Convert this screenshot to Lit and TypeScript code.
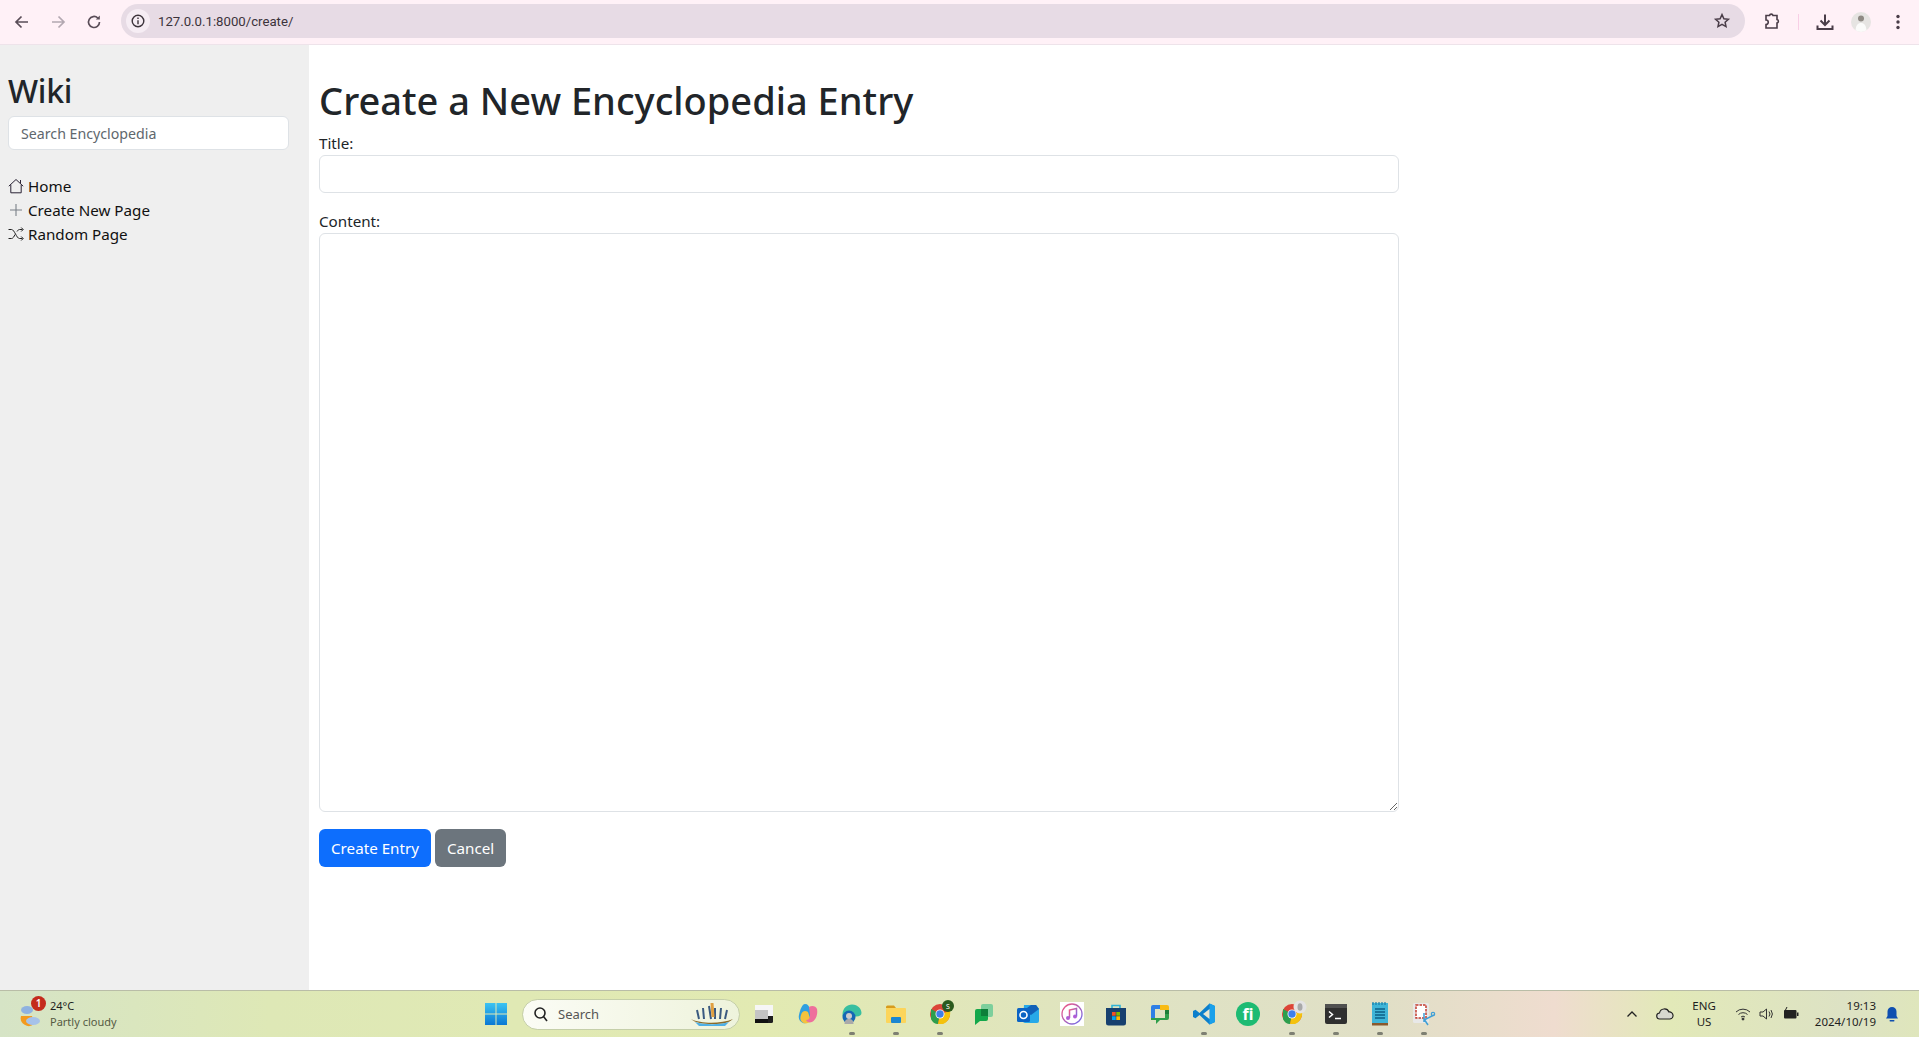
import { LitElement, html, css, svg } from 'lit';
import { customElement } from 'lit/decorators.js';

@customElement('browser-bar')
class BrowserBar extends LitElement {
  static styles = css`
    :host {
      display: flex;
      align-items: center;
      height: 44px;
      flex: none;
      background: #fff1f7;
      border-bottom: 1px solid #eee3ea;
      box-sizing: content-box;
      font-family: "Roboto", sans-serif;
    }
    .nav {
      display: flex;
      gap: 16px;
      padding-left: 12px;
      margin-right: 17px;
    }
    .btn {
      width: 20px;
      height: 20px;
      display: block;
    }
    .omni {
      flex: 1;
      height: 34px;
      margin-bottom: 2px;
      border-radius: 17px;
      background: #e7dbe5;
      display: flex;
      align-items: center;
      padding: 0 14px 0 5px;
      font-size: 13.200px;
      color: #3c333b;
    }
    .info {
      width: 24px;
      height: 24px;
      border-radius: 50%;
      background: #f6edf4;
      display: flex;
      align-items: center;
      justify-content: center;
      margin-right: 8px;
    }
    .url {
      flex: 1;
    }
    .right {
      display: flex;
      align-items: center;
      padding-left: 17px;
      padding-right: 17px;
    }
    .sep {
      width: 1px;
      height: 16px;
      background: #f8cfe6;
      margin: 0 16px;
    }
    .avatar {
      width: 20px;
      height: 20px;
      border-radius: 50%;
      margin: 0 23px 0 16px;
      background: #e6e4e2;
      overflow: hidden;
    }
  `;

  render() {
    return html`
      <div class="nav">
        <svg class="btn" viewBox="0 0 20 20" fill="none" stroke="#5a4d58" stroke-width="1.7"><path d="M16 10H4.500M9.500 4.500 4 10l5.500 5.500"/></svg>
        <svg class="btn" viewBox="0 0 20 20" fill="none" stroke="#b3a8b1" stroke-width="1.7"><path d="M4 10h11.500M10.500 4.500 16 10l-5.500 5.500"/></svg>
        <svg class="btn" viewBox="0 0 20 20" fill="none" stroke="#5a4d58" stroke-width="1.7"><path d="M15.500 10a5.500 5.500 0 1 1-1.700-4"/><path d="M15.800 3.500v4h-4" fill="#5a4d58" stroke="none"/></svg>
      </div>
      <div class="omni">
        <div class="info">
          <svg width="16" height="16" viewBox="0 0 16 16" fill="none" stroke="#3c333b" stroke-width="1.400"><circle cx="8" cy="8" r="5.800"/><path d="M8 7.200v4M8 4.500v1.400"/></svg>
        </div>
        <span class="url">127.0.0.1:8000/create/</span>
        <svg width="18" height="18" viewBox="0 0 18 18" fill="none" stroke="#4a3d48" stroke-width="1.500"><path d="M9 2.600l1.900 4.100 4.500.5-3.300 3 .9 4.400L9 12.400l-4 2.200.9-4.400-3.300-3 4.500-.5z"/></svg>
      </div>
      <div class="right">
        <svg width="20" height="20" viewBox="0 0 20 20" fill="none" stroke="#4a3d48" stroke-width="1.600"><path d="M4 3.500h3.500a1.800 1.800 0 0 1 3.500 0H15v4a1.800 1.800 0 0 1 0 3.500v5H4v-3.500a2 2 0 0 0 0-4.500z"/></svg>
        <div class="sep"></div>
        <svg width="20" height="20" viewBox="0 0 20 20" fill="none" stroke="#4a3d48" stroke-width="2"><path d="M10 2.500v10M5.500 8.500l4.500 4.500 4.500-4.500M2.500 13.500v3.500h15v-3.500"/></svg>
        <div class="avatar">
          <svg width="20" height="20" viewBox="0 0 20 20"><circle cx="10" cy="6.500" r="3" fill="#8f8a84"/><path d="M4.500 20c0-7 2.500-9 5.500-9s5.500 2 5.500 9z" fill="#fbfbfa"/></svg>
        </div>
        <svg width="8" height="20" viewBox="4 0 8 20" fill="#4a3d48"><circle cx="8" cy="4.500" r="1.700"/><circle cx="8" cy="10" r="1.700"/><circle cx="8" cy="15.500" r="1.700"/></svg>
      </div>
    `;
  }
}

@customElement('wiki-sidebar')
class WikiSidebar extends LitElement {
  static styles = css`
    :host {
      display: block;
      width: 309px;
      flex: none;
      box-sizing: border-box;
      background: #efefef;
      padding: 22px 20px 0 8px;
      color: #212529;
    }
    h2 {
      margin: 0 0 1px;
      font-size: 32px;
      line-height: 48px;
      font-weight: 500;
      letter-spacing: -0.3px;
    }
    input {
      display: block;
      width: 100%;
      height: 34px;
      box-sizing: border-box;
      border: 1px solid #dee2e6;
      border-radius: 6px;
      padding: 0 12px;
      font: inherit;
      font-size: 14.200px;
      background: #fff;
    }
    input::placeholder {
      color: #60676d;
      opacity: 1;
    }
    ul {
      list-style: none;
      margin: 24px 0 0;
      padding: 0;
    }
    li {
      height: 24px;
      display: flex;
      align-items: center;
      gap: 4px;
      font-size: 15.200px;
      color: #111;
    }
    svg {
      width: 16px;
      height: 16px;
      flex: none;
    }
  `;

  render() {
    return html`
      <h2>Wiki</h2>
      <input type="text" placeholder="Search Encyclopedia" />
      <ul>
        <li>
          <svg viewBox="0 0 16 16" fill="none" stroke="#2a2335" stroke-width="1"><path d="M.8 8.200 8 1.500l7.200 6.700M2.800 6.800v8h10.400v-8M12.500 2v3.500"/></svg>
          Home
        </li>
        <li>
          <svg viewBox="0 0 16 16" fill="none" stroke="#7a8088" stroke-width="1.100"><path d="M8 2v12M2 8h12"/></svg>
          Create New Page
        </li>
        <li>
          <svg viewBox="0 0 16 16" fill="none" stroke="#222" stroke-width="1"><path d="M.5 3.500h3c3 0 5 9 8 9h3M.5 12.500h3c1.500 0 2.600-2 3.500-4M9 5.500c.8-1.200 1.500-2 2.500-2h3M13.200 1.500l2 2-2 2M13.200 10.500l2 2-2 2"/></svg>
          Random Page
        </li>
      </ul>
    `;
  }
}

@customElement('create-form')
class CreateForm extends LitElement {
  static styles = css`
    :host {
      display: block;
      flex: 1;
      min-width: 0;
      padding: 31px 0 0 10px;
      color: #212529;
      background: #fff;
    }
    h1 {
      margin: 0 0 7px;
      font-size: 38px;
      line-height: 48px;
      font-weight: 500;
    }
    form {
      width: 1080px;
    }
    .group {
      margin-bottom: 16px;
    }
    label {
      display: block;
      font-size: 15.200px;
      line-height: 24px;
    }
    input,
    textarea {
      display: block;
      width: 100%;
      box-sizing: border-box;
      border: 1px solid #dee2e6;
      border-radius: 6px;
      background: #fff;
      margin: 0;
      font: inherit;
    }
    input {
      height: 38px;
    }
    textarea {
      height: 579px;
    }
    .actions {
      display: flex;
      gap: 4px;
      margin-top: 17px;
    }
    button {
      height: 38px;
      border: 0;
      border-radius: 6px;
      padding: 0 12px;
      font: inherit;
      font-size: 15.200px;
      color: #fff;
    }
    .primary {
      background: #0d6efd;
    }
    .secondary {
      background: #6c757d;
    }
  `;

  render() {
    return html`
      <h1>Create a New Encyclopedia Entry</h1>
      <form>
        <div class="group">
          <label>Title:</label>
          <input type="text" />
        </div>
        <div>
          <label>Content:</label>
          <textarea></textarea>
        </div>
        <div class="actions">
          <button type="button" class="primary">Create Entry</button>
          <button type="button" class="secondary">Cancel</button>
        </div>
      </form>
    `;
  }
}

const dock = [
  svg`<rect x="3" y="3" width="18" height="18" rx="1.500" fill="#1e1e1e"/><rect x="3" y="3" width="18" height="11" fill="#f6f6f6"/><rect x="3" y="8" width="13" height="9" fill="#c4c4c4"/><rect x="3" y="17" width="13" height="4" fill="#111"/>`,
  svg`<path d="M9 2c3 0 4 2 5 5l2 7c-1 5-5 8-9 7-3-1-5-4-4-8 1-5 3-11 6-11z" fill="#2f9fe0"/><path d="M5 13c1-4 4-5 7-3l3 9c-3 3-7 3-9 1-2-2-2-4-1-7z" fill="#f4c23e"/><path d="M13 5c3-2 7-1 8 2 1 5-1 11-5 13-3 1-5 0-6-2 3 0 4-2 4-5z" fill="#ee6f9c"/>`,
  svg`<path d="M2.500 12C3 6 7 2.500 12 2.500c6 0 9.500 4.500 9.500 8.500 0 2-2 3.500-5 3.500-3 0-3-2-3-3-3-1-7 0-8 4-1 1-3 0-3-3.500z" fill="#38bfa0"/><circle cx="9" cy="15" r="6.500" fill="#1467b5"/><circle cx="9" cy="14" r="3" fill="#ccc"/><path d="M4.500 22c0-4 2-5 4.500-5s4.500 1 4.500 5z" fill="#aaa"/>`,
  svg`<path d="M2 5a1.500 1.500 0 0 1 1.500-1.500H10l2 2.500h-10z" fill="#d79b1d"/><rect x="2" y="6" width="20" height="15" rx="1" fill="#fcd55b"/><rect x="7" y="15" width="10" height="6" rx="1" fill="#1b86d1"/>`,
  svg`<circle cx="12" cy="12" r="10" fill="#dc4437"/><path d="M12 12 3 7v10c1 3 4 5 7 5z" fill="#2d9e4d"/><path d="M12 12l10-3c1 6-2 11-7 13l-5 0z" fill="#f4c20d"/><circle cx="12" cy="12" r="4.500" fill="#fff"/><circle cx="12" cy="12" r="3.700" fill="#3f7fe8"/><circle cx="20" cy="4" r="6" fill="#2b5a1e"/><text x="20" y="6.500" font-size="7" fill="#fff" text-anchor="middle" font-family="Noto Sans">S</text>`,
  svg`<rect x="9" y="2" width="12" height="13" rx="2" fill="#7dcf9c"/><path d="M3 9a2 2 0 0 1 2-2h9a2 2 0 0 1 2 2v8a2 2 0 0 1-2 2H8l-5 4z" fill="#14a84b"/><rect x="9" y="7" width="7" height="7" fill="#0d7f39"/>`,
  svg`<path d="M8 3h12l3 4v12a2 2 0 0 1-2 2H9a2 2 0 0 1-2-2z" fill="#27a9e8"/><path d="M7 9l8-6h5l3 4-8 6z" fill="#1160b7"/><rect x="1" y="6" width="13" height="14" rx="1.500" fill="#0b63c4"/><circle cx="7.500" cy="13" r="3.500" fill="none" stroke="#fff" stroke-width="1.600"/>`,
  svg`<rect width="24" height="24" fill="#fff"/><circle cx="12" cy="12" r="10" fill="none" stroke="url(#itn)" stroke-width="1.300"/><defs><linearGradient id="itn" x1="0" y1="0" x2="1" y2="1"><stop offset="0" stop-color="#f6567e"/><stop offset="1" stop-color="#6b6ef0"/></linearGradient></defs><path d="M9.500 16V8l7-1.500v8" fill="none" stroke="url(#itn)" stroke-width="1.500"/><circle cx="8" cy="16" r="2" fill="#b05ed6"/><circle cx="15" cy="14.500" r="2" fill="#b05ed6"/>`,
  svg`<path d="M8 6V3.500h8V6" fill="none" stroke="#31b3d6" stroke-width="1.600"/><path d="M2 6h20v15a2.500 2.500 0 0 1-2.500 2.500h-15A2.500 2.500 0 0 1 2 21z" fill="#17406f"/><rect x="8" y="10" width="3.700" height="3.700" fill="#f25022"/><rect x="12.300" y="10" width="3.700" height="3.700" fill="#7fba00"/><rect x="8" y="14.300" width="3.700" height="3.700" fill="#00a4ef"/><rect x="12.300" y="14.300" width="3.700" height="3.700" fill="#ffb900"/>`,
  svg`<path d="M3 5a2 2 0 0 1 2-2h7v4H7v9H3z" fill="#2f7fe6"/><path d="M12 3h7a2 2 0 0 1 2 2v3h-9z" fill="#f8bb14"/><path d="M17 8h4v8a2 2 0 0 1-2 2h-7l-4 4v-4H3v-2h14z" fill="#2e9e4a"/><path d="M17 8h4v4h-4z" fill="#1c7d39"/>`,
  svg`<path d="M17.500 1.500 23 4v16l-5.500 2.500L7.500 13l-4 3.200L1 15V9l2.500-1.200 4 3.200z" fill="#0c7fcb"/><path d="M17.500 1.500 23 4v16l-5.500 2.500z" fill="#1aa0ea"/><path d="M17.500 7 11 12l6.500 5z" fill="#e6e6d2"/>`,
  svg`<circle cx="12" cy="12" r="12" fill="#1dbb73"/><text x="12" y="18" font-size="16" font-weight="700" fill="#fff" text-anchor="middle" font-family="Noto Sans">fi</text>`,
  svg`<circle cx="12" cy="12" r="10" fill="#dc4437"/><path d="M12 12 3 7v10c1 3 4 5 7 5z" fill="#2d9e4d"/><path d="M12 12l10-3c1 6-2 11-7 13l-5 0z" fill="#f4c20d"/><circle cx="12" cy="12" r="4.500" fill="#fff"/><circle cx="12" cy="12" r="3.700" fill="#3f7fe8"/><circle cx="20" cy="5" r="6.500" fill="#e3e3e3"/><ellipse cx="20" cy="5" rx="2.500" ry="3.800" fill="#a8a8a8"/>`,
  svg`<rect x="1" y="2" width="22" height="20" rx="2" fill="#2f2f2f"/><rect x="1" y="2" width="22" height="4" fill="#505050"/><path d="M5 9.500l3.500 3-3.500 3" fill="none" stroke="#fff" stroke-width="1.500"/><path d="M11 16.500h6" stroke="#fff" stroke-width="1.500"/>`,
  svg`<rect x="4" y="1" width="16" height="21" fill="#3fb5d8"/><path d="M5 0v3M8 0v3M11 0v3M14 0v3M17 0v3" stroke="#1a7fa8" stroke-width="1.200"/><path d="M7 7h10M7 10h10M7 13h10M7 16h10" stroke="#0d5f86" stroke-width="1.300"/><rect x="4" y="21" width="16" height="2.500" fill="#8a5a2e"/>`,
  svg`<rect x="1" y="1" width="16" height="20" rx="1.500" fill="#e8e8e8"/><rect x="4" y="3" width="10" height="13" fill="#fff" stroke="#c43b2e" stroke-width="1.500" stroke-dasharray="2.500 1"/><path d="M12 11v9M16 23l-4-6M22 13l-10 5" stroke="#3f9fd6" stroke-width="1.500" fill="none"/><circle cx="21" cy="12" r="1.700" fill="none" stroke="#3f9fd6" stroke-width="1.200"/>`,
];

const running = new Set([2, 3, 4, 10, 12, 13, 14, 15]);

@customElement('win-taskbar')
class WinTaskbar extends LitElement {
  static styles = css`
    :host {
      display: grid;
      grid-template-columns: 1fr auto 1fr;
      align-items: center;
      height: 47px;
      flex: none;
      box-sizing: border-box;
      border-top: 1px solid #b9bda7;
      background: linear-gradient(90deg, #d6e4c6 0%, #dee8b6 14%, #e2eab2 40%, #dfe2c4 62%, #e0dfc6 72%, #efdccf 81%, #e2e9b8 87%, #dde2c4 96%, #dfe6bc 100%);
      font-family: "Noto Sans", sans-serif;
      color: #1e1e1e;
    }
    .weather {
      display: flex;
      align-items: center;
      padding-left: 18px;
      gap: 6px;
      font-size: 11px;
      line-height: 16px;
    }
    .weather-icon {
      position: relative;
      width: 26px;
      height: 26px;
    }
    .badge {
      position: absolute;
      top: -5px;
      right: -2px;
      width: 15px;
      height: 15px;
      border-radius: 50%;
      background: #c42b1c;
      color: #fff;
      font-size: 10px;
      font-weight: 600;
      line-height: 15px;
      text-align: center;
    }
    .weather small {
      display: block;
      font-size: 11px;
      color: #555a44;
    }
    .center {
      display: flex;
      align-items: center;
      grid-column: 2;
      margin-left: 1px;
    }
    .start {
      width: 24px;
      height: 24px;
      margin-right: 14px;
    }
    .search {
      width: 218px;
      height: 31px;
      box-sizing: border-box;
      border-radius: 16px;
      border: 1px solid #c5cfa9;
      background: linear-gradient(90deg, #fbfcf5, #eef3dc);
      display: flex;
      align-items: center;
      padding: 0 4px 0 9px;
      font-size: 13px;
      color: #555;
      gap: 8px;
    }
    .search span {
      flex: 1;
    }
    .dock {
      display: flex;
      gap: 20px;
      margin-left: 12px;
    }
    .slot {
      position: relative;
      width: 24px;
      height: 24px;
    }
    .slot svg {
      display: block;
      overflow: visible;
    }
    .slot.on::after {
      content: "";
      position: absolute;
      left: 9px;
      bottom: -9px;
      width: 6px;
      height: 3px;
      border-radius: 2px;
      background: #7d7f72;
    }
    .tray {
      grid-column: 3;
      display: flex;
      align-items: center;
      justify-content: flex-end;
      padding-right: 20px;
      font-size: 11.500px;
      line-height: 16px;
    }
    .lang {
      text-align: center;
      margin: 0 19px 0 18px;
    }
    .icons {
      display: flex;
      align-items: center;
      gap: 8px;
      margin-right: 16px;
    }
    .clock {
      text-align: right;
      margin-right: 9px;
    }
  `;

  render() {
    return html`
      <div class="weather">
        <div class="weather-icon">
          <svg width="26" height="26" viewBox="0 0 26 26">
            <ellipse cx="9" cy="9" rx="6" ry="4" fill="#8fb2e0"/>
            <path d="M3 15a8 8 0 0 0 13 8l-2-8z" fill="#f39a1e"/>
            <ellipse cx="15" cy="20" rx="7" ry="4" fill="#a6c2ea"/>
          </svg>
          <div class="badge">1</div>
        </div>
        <div>24°C<small>Partly cloudy</small></div>
      </div>
      <div class="center">
        <svg class="start" viewBox="0 0 24 24">
          <defs><linearGradient id="win" x1="0" y1="0" x2="0" y2="1"><stop offset="0" stop-color="#3bc4f2"/><stop offset="1" stop-color="#0a78d4"/></linearGradient></defs>
          <path d="M1 1h10.500v10.500H1zM12.500 1H23v10.500H12.500zM1 12.500h10.500V23H1zM12.500 12.500H23V23H12.500z" fill="url(#win)"/>
        </svg>
        <div class="search">
          <svg width="18" height="18" viewBox="0 0 18 18" fill="none" stroke="#222" stroke-width="1.600"><circle cx="8" cy="8" r="5"/><path d="M11.500 11.500 15 16"/></svg>
          <span>Search</span>
          <svg width="46" height="26" viewBox="0 0 46 26">
            <path d="M2 18c10 5 30 5 42 0-4 4-10 5-20 5S6 22 2 18z" fill="#8a6a2a"/>
            <path d="M6 21c10 3 24 3 34 0l-4 4H10z" fill="#4fb0e6"/>
            <path d="M8 9l2 9M14 7l1 11M20 5l2 13M26 7v11M32 7l-1 11M38 9l-2 9" stroke="#3a5a80" stroke-width="2"/>
            <path d="M23 2l1 14" stroke="#e0a040" stroke-width="3"/>
          </svg>
        </div>
        <div class="dock">
          ${dock.map(
            (icon, i) => html`<div class="slot ${running.has(i) ? 'on' : ''}"><svg width="24" height="24" viewBox="0 0 24 24">${icon}</svg></div>`
          )}
        </div>
      </div>
      <div class="tray">
        <svg width="14" height="14" viewBox="0 0 14 14" fill="none" stroke="#222" stroke-width="1.300"><path d="M2.500 9.500 7 5l4.500 4.500"/></svg>
        <svg style="margin-left:17px" width="18" height="14" viewBox="0 0 18 14" fill="#d8d8d0" stroke="#222" stroke-width="1.200"><path d="M4 12a3 3 0 0 1-.5-6 5 5 0 0 1 9.500-1 3.500 3.500 0 0 1 1 7z"/></svg>
        <div class="lang">ENG<br />US</div>
        <div class="icons">
          <svg width="16" height="14" viewBox="0 0 16 14" fill="none" stroke="#333" stroke-width="1"><path d="M1 5a10 10 0 0 1 14 0M3.500 7.500a6.500 6.500 0 0 1 9 0M6 10a3 3 0 0 1 4 0"/><circle cx="8" cy="12" r="1" fill="#222"/></svg>
          <svg width="16" height="14" viewBox="0 0 16 14" fill="none" stroke="#333" stroke-width="1"><path d="M1 5v4h3l3.500 3V2L4 5zM10 4.500a4 4 0 0 1 0 5M12 3a7 7 0 0 1 0 8"/></svg>
          <svg width="16" height="14" viewBox="0 0 16 14"><rect x="1" y="3" width="12.500" height="8.500" rx="1" fill="#222"/><rect x="14" y="5.500" width="1.500" height="3.500" fill="#222"/><path d="M4 0 2 4h2L3 7" fill="none" stroke="#222"/></svg>
        </div>
        <div class="clock">19:13<br />2024/10/19</div>
        <svg width="14" height="16" viewBox="0 0 14 16" fill="#0f4fb0"><path d="M7 1a4.500 4.500 0 0 0-4.500 4.500V10L1 12.500h12L11.500 10V5.500A4.500 4.500 0 0 0 7 1z"/><rect x="4.500" y="14" width="5" height="1.500" rx=".7"/></svg>
      </div>
    `;
  }
}

@customElement('app-root')
export class AppRoot extends LitElement {
  static styles = css`
    :host {
      display: flex;
      flex-direction: column;
      height: 100vh;
      overflow: hidden;
      font-family: "Noto Sans", "Open Sans", sans-serif;
    }
    .page {
      flex: 1;
      display: flex;
      min-height: 0;
    }
  `;

  render() {
    return html`
      <browser-bar></browser-bar>
      <div class="page">
        <wiki-sidebar></wiki-sidebar>
        <create-form></create-form>
      </div>
      <win-taskbar></win-taskbar>
    `;
  }
}
